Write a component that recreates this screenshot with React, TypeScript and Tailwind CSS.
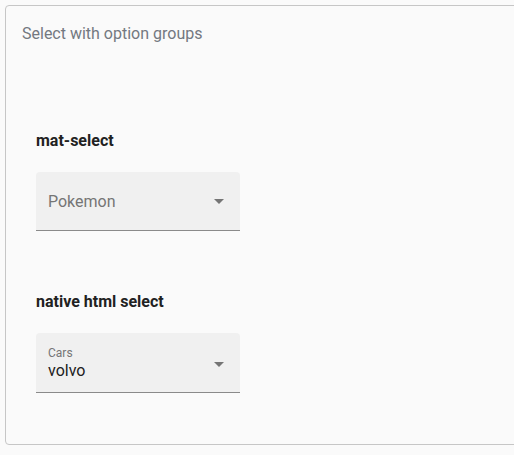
function Caret() {
  return (
    <svg width="10" height="5" viewBox="0 0 10 5" className="shrink-0">
      <path d="M0 0L5 5L10 0Z" fill="#757575" />
    </svg>
  );
}

function Section({ title, children }: { title: string; children: React.ReactNode }) {
  return (
    <section className="flex flex-col">
      <h3 className="text-[16px] leading-[24px] font-bold text-[#212121]">{title}</h3>
      <div className="mt-[19px]">{children}</div>
    </section>
  );
}

export default function App() {
  return (
    <div
      className="min-h-[455px] bg-[#fafafa] pt-[5px] pl-[5px]"
      style={{ fontFamily: 'Roboto, "Noto Sans", sans-serif' }}
    >
      <div className="h-[440px] -mr-[10px] border border-[#c6c6c6] rounded-[4px] bg-[#fafafa] pt-[16px] pl-[16px]">
        <h2 className="text-[16px] leading-[24px] text-[#737880]">Select with option groups</h2>

        <div className="pl-[14px] pt-[83px] flex flex-col gap-[59px]">
          <Section title="mat-select">
            <div className="w-[204px] h-[59px] bg-[#f0f0f0] rounded-t-[4px] border-b border-[#8a8a8a] flex items-center px-[12px]">
              <span className="flex-1 text-[16px] leading-[20px] text-[#757575] pt-[2px]">Pokemon</span>
              <span className="mr-[4px]">
                <Caret />
              </span>
            </div>
          </Section>

          <Section title="native html select">
            <div className="w-[204px] h-[60px] bg-[#f0f0f0] rounded-t-[4px] border-b border-[#8a8a8a] flex items-center px-[12px]">
              <div className="flex-1 flex flex-col pt-[1px]">
                <span className="text-[12px] leading-[14px] text-[#757575]">Cars</span>
                <span className="text-[16px] leading-[20px] text-[#212121] mt-[1px]">volvo</span>
              </div>
              <span className="mr-[4px] mt-[3px]">
                <Caret />
              </span>
            </div>
          </Section>
        </div>
      </div>
    </div>
  );
}
